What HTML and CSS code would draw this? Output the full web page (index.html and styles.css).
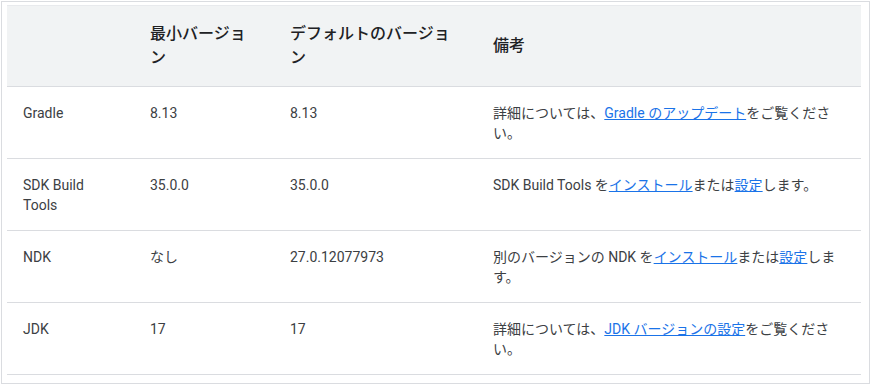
FILE: index.html
```html
<!DOCTYPE html>
<html lang="ja">
<head>
<meta charset="utf-8">
<link rel="stylesheet" href="styles.css">
</head>
<body>
<div class="frame">
  <table class="versions">
    <colgroup>
      <col class="c1"><col class="c2"><col class="c3"><col class="c4">
    </colgroup>
    <thead>
      <tr>
        <th></th>
        <th>最小バージョン</th>
        <th>デフォルトのバージョン</th>
        <th>備考</th>
      </tr>
    </thead>
    <tbody>
      <tr>
        <td>Gradle</td>
        <td>8.13</td>
        <td>8.13</td>
        <td>詳細については、<a href="#">Gradle のアップデート</a>をご覧ください。</td>
      </tr>
      <tr>
        <td>SDK Build Tools</td>
        <td>35.0.0</td>
        <td>35.0.0</td>
        <td>SDK Build Tools を<a href="#">インストール</a>または<a href="#">設定</a>します。</td>
      </tr>
      <tr>
        <td>NDK</td>
        <td>なし</td>
        <td>27.0.12077973</td>
        <td>別のバージョンの NDK を<a href="#">インストール</a>または<a href="#">設定</a>します。</td>
      </tr>
      <tr>
        <td>JDK</td>
        <td>17</td>
        <td>17</td>
        <td>詳細については、<a href="#">JDK バージョンの設定</a>をご覧ください。</td>
      </tr>
    </tbody>
  </table>
</div>
</body>
</html>
```

FILE: styles.css
```css
html, body {
  margin: 0;
  padding: 0;
  background: #ffffff;
}
body {
  font-family: Roboto, "Noto Sans CJK JP", sans-serif;
  color: #202124;
  -webkit-font-smoothing: antialiased;
}
.frame {
  margin: 1px 0 0 1px;
  width: 855px;
  height: 372px;
  border: 1px solid #dadce0;
  padding: 3px 7px 6px 5px;
}
.versions {
  width: 854px;
  table-layout: fixed;
  border-collapse: collapse;
  border-top: 1px solid #e8eaed;
}
.c1 { width: 127px; }
.c2 { width: 140px; }
.c3 { width: 203px; }
.c4 { width: 384px; }
.versions th {
  background: #f1f3f4;
  font-size: 16px;
  font-weight: 500;
  line-height: 24px;
  text-align: left;
  vertical-align: middle;
  padding: 16px;
  border-bottom: 1px solid #dadce0;
  color: #202124;
}
.versions td {
  font-size: 14px;
  line-height: 20px;
  vertical-align: top;
  padding: 16px 16px 15px;
  border-bottom: 1px solid #dadce0;
  color: #3c4043;
}
.versions a {
  color: #1a73e8;
  text-decoration: underline;
}
```
